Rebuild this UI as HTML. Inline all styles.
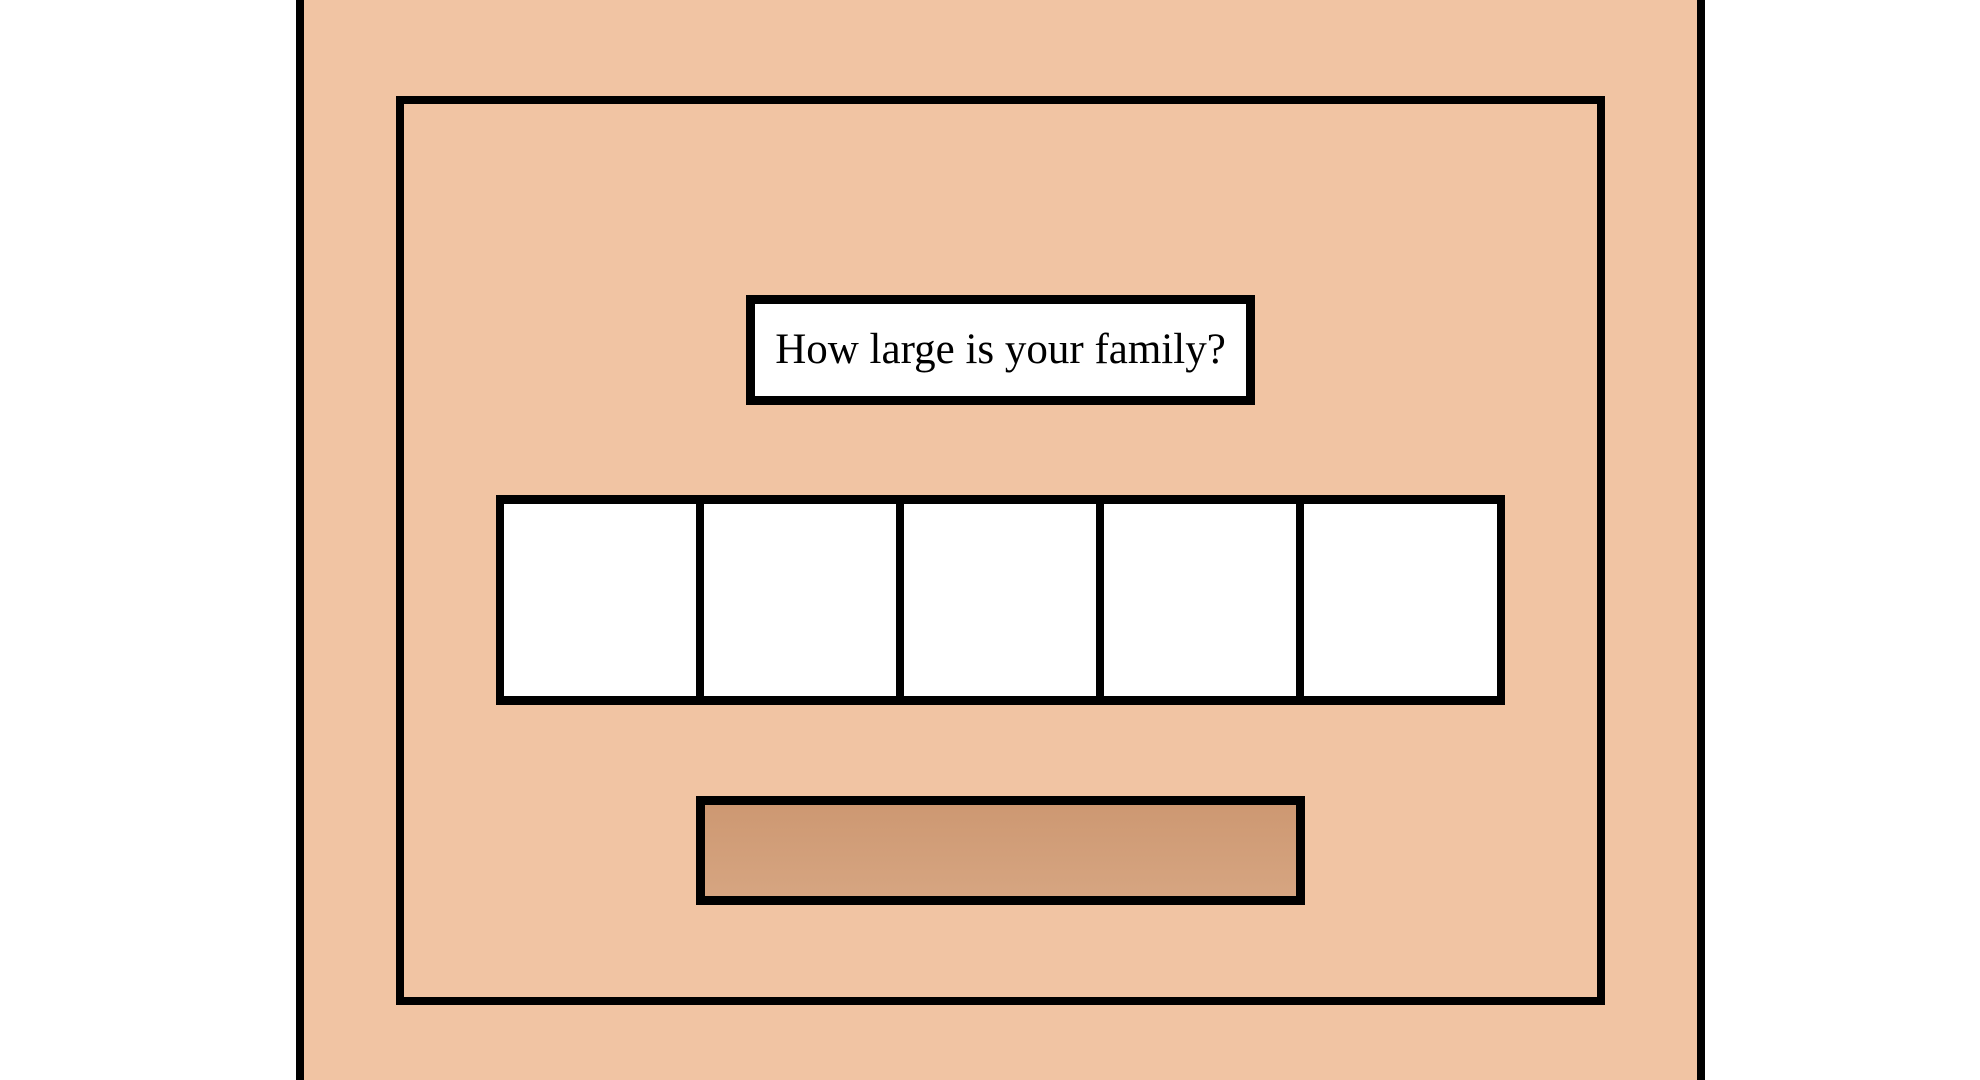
<!DOCTYPE html>
<html><head><meta charset="utf-8"><style>
html,body{margin:0;padding:0;width:1980px;height:1080px;background:#fff;overflow:hidden;position:relative}
div{position:absolute;box-sizing:border-box}
.outer{left:296px;top:-10px;width:1409px;height:1100px;background:#f1c4a3;border:8px solid #000}
.inner{left:396px;top:96px;width:1209px;height:909px;border:8px solid #000}
.q{left:746px;top:295px;width:509px;height:110px;background:#fff;border:9px solid #000;font-family:"Liberation Serif","Noto Serif CJK SC",serif;font-size:43px;text-align:center;line-height:92px;color:#000}
.cell{top:495px;height:210px;width:209px;background:#fff;border:8px solid #000;border-top-width:9px;border-bottom-width:9px}
.btn{left:696px;top:796px;width:609px;height:109px;border:9px solid #000;background:linear-gradient(#cd9872,#d6a581)}
</style></head><body>
<div class="outer"></div>
<div class="inner"></div>
<div class="q">How large is your family?</div>
<div class="cell" style="left:496px"></div>
<div class="cell" style="left:696px"></div>
<div class="cell" style="left:896px"></div>
<div class="cell" style="left:1096px"></div>
<div class="cell" style="left:1296px"></div>
<div class="btn"></div>
</body></html>
